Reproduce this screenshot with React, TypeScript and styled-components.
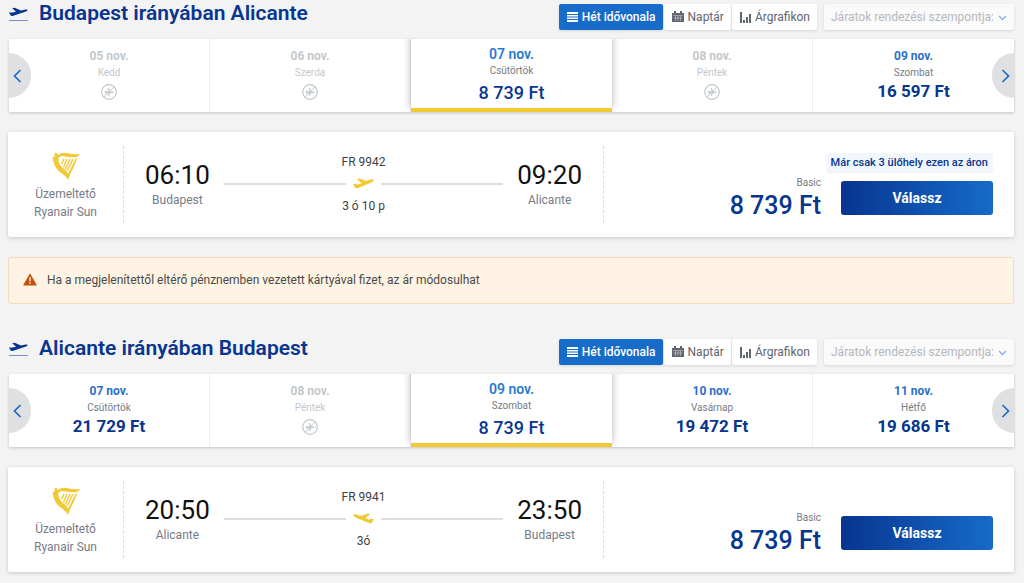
import React from 'react';
import styled, { createGlobalStyle, css } from 'styled-components';

const colors = {
  page: '#f3f3f3',
  navy: '#073590',
  blue: '#176bc9',
  yellow: '#f1c933',
  grey: '#767b85',
  pale: '#c3c8cd',
  ink: '#1d1d1d',
};

const GlobalStyle = createGlobalStyle`
  *, *::before, *::after { box-sizing: border-box; }
  body {
    margin: 0;
    background: ${colors.page};
    font-family: Roboto, "Liberation Sans", sans-serif;
    font-size: 12px;
    color: ${colors.ink};
  }
  button, select { font-family: inherit; margin: 0; }
  h2, p { margin: 0; }
  svg { display: block; flex: none; }
`;

const Page = styled.main`
  padding: 4px 10px 12px 8px;
`;

const Journey = styled.section`
  & + & { margin-top: 35px; }
`;

const Header = styled.header`
  display: flex;
  align-items: flex-start;
  justify-content: space-between;
  height: 35px;
`;

const Title = styled.h2`
  display: flex;
  align-items: center;
  gap: 11px;
  color: ${colors.navy};
  font-size: 21px;
  line-height: 18px;
  font-weight: 600;
`;

const Tools = styled.div`
  display: flex;
  gap: 7px;
`;

const Tabs = styled.div`
  display: flex;
  gap: 1px;
`;

const Tab = styled.button<{ $active?: boolean }>`
  display: flex;
  align-items: center;
  gap: 4px;
  height: 26px;
  padding: 0 7px 0 8px;
  border: 0;
  border-radius: 2px;
  background: ${p => (p.$active ? colors.blue : '#fff')};
  color: ${p => (p.$active ? '#fff' : '#60656f')};
  font-size: 12px;
  font-weight: ${p => (p.$active ? 500 : 400)};
  white-space: nowrap;
  box-shadow: 0 1px 3px rgba(0, 0, 0, 0.12);
`;

const SortBox = styled.label`
  position: relative;
  display: block;
  width: 190px;
  height: 26px;
  color: #7db3e8;

  svg {
    position: absolute;
    right: 7px;
    top: 11px;
    pointer-events: none;
  }
`;

const SortSelect = styled.select`
  appearance: none;
  width: 100%;
  height: 26px;
  padding: 0 16px 0 7px;
  border: 0;
  border-radius: 2px;
  background: #fafafa;
  color: #b4b8bd;
  opacity: 1;
  font-size: 12px;
  font-weight: 400;
  box-shadow: 0 1px 3px rgba(0, 0, 0, 0.12);
`;

const Strip = styled.div`
  position: relative;
  margin-left: 1px;
  box-shadow: 0 1px 3px rgba(0, 0, 0, 0.2);
`;

const Days = styled.div`
  display: grid;
  grid-template-columns: repeat(5, 1fr);
  height: 73px;
  overflow: hidden;
  background: #fff;
`;

const DayCell = styled.button<{ $state: 'open' | 'none' | 'selected' }>`
  display: flex;
  flex-direction: column;
  align-items: center;
  padding: 9px 0 0;
  border: 0;
  border-right: 1px solid #f0f0f0;
  background: #fff;
  color: ${p => (p.$state === 'none' ? colors.pale : colors.grey)};

  &:last-child { border-right: 0; }

  ${p =>
    p.$state === 'selected' &&
    css`
      position: relative;
      padding-top: 7px;
      border-right: 0;
      border-bottom: 4px solid ${colors.yellow};
      box-shadow: 0 -4px 8px rgba(0, 0, 0, 0.3);
    `}
`;

const DayDate = styled.span<{ $state: 'open' | 'none' | 'selected' }>`
  font-size: ${p => (p.$state === 'selected' ? 14 : 12)}px;
  line-height: 16px;
  font-weight: ${p => (p.$state === 'selected' ? 600 : 700)};
  color: ${p => (p.$state === 'none' ? colors.pale : p.$state === 'selected' ? '#2a7ad3' : '#2c6fcb')};
`;

const DayName = styled.span`
  font-size: 10px;
  line-height: 18px;
`;

const DayPrice = styled.span<{ $selected?: boolean }>`
  margin-top: ${p => (p.$selected ? 4 : 0)}px;
  color: ${colors.navy};
  font-size: ${p => (p.$selected ? 18 : 17)}px;
  line-height: 18px;
  font-weight: ${p => (p.$selected ? 500 : 700)};
`;

const NoFlight = styled.span`
  margin-top: 2px;
`;

const Arrow = styled.button<{ $side: 'left' | 'right' }>`
  position: absolute;
  top: 14px;
  ${p => p.$side}: 0;
  display: flex;
  align-items: center;
  justify-content: ${p => (p.$side === 'left' ? 'flex-start' : 'flex-end')};
  width: 22px;
  height: 45px;
  padding: 0 4px;
  border: 0;
  border-radius: ${p => (p.$side === 'left' ? '0 23px 23px 0' : '23px 0 0 23px')};
  background: #dfe0e2;
  color: ${colors.blue};
`;

const Card = styled.article`
  display: flex;
  align-items: center;
  height: 105px;
  margin-top: 20px;
  padding: 0 21px 0 0;
  background: #fff;
  border-radius: 2px;
  box-shadow: 0 1px 4px rgba(0, 0, 0, 0.18);
`;

const Operator = styled.div`
  display: flex;
  flex-direction: column;
  align-items: center;
  width: 116px;
  height: 77px;
  padding-top: 6px;
  border-right: 1px dashed #dcdddf;
  color: ${colors.grey};
  font-size: 12px;
  line-height: 18px;
  text-align: center;

  p { margin-top: 5px; }
`;

const Route = styled.div`
  display: flex;
  align-items: center;
  flex: 0 1 480px;
  height: 77px;
  padding: 0 21px;
  border-right: 1px dashed #dcdddf;
`;

const Stop = styled.div`
  text-align: center;
`;

const Time = styled.div`
  font-size: 26px;
  line-height: 28px;
  color: #111;
`;

const City = styled.div`
  margin-top: 2px;
  font-size: 12px;
  line-height: 18px;
  color: ${colors.grey};
`;

const Path = styled.div`
  flex: 1;
  margin: 0 14px;
  padding-bottom: 2px;
  color: #3c3f45;
  font-size: 12px;
  line-height: 16px;
  text-align: center;
`;

const PathLine = styled.div`
  display: flex;
  align-items: center;
  gap: 7px;
  height: 12px;
  margin: 8px 0;

  &::before, &::after {
    content: "";
    flex: 1;
    height: 2px;
    background: #dddee0;
  }
`;

const Fare = styled.div`
  margin-left: auto;
  padding-top: 28px;
  text-align: right;
`;

const FareName = styled.div`
  font-size: 10px;
  line-height: 14px;
  color: ${colors.grey};
`;

const FarePrice = styled.div`
  font-size: 25px;
  line-height: 32px;
  font-weight: 500;
  color: ${colors.navy};
`;

const Action = styled.div`
  display: flex;
  flex-direction: column;
  align-items: flex-end;
  align-self: flex-start;
  width: 172px;
  padding-top: 21px;
`;

const SeatNote = styled.div<{ $empty?: boolean }>`
  height: 20px;
  margin-bottom: 8px;
  padding: 0 5px;
  border-radius: 3px;
  background: ${p => (p.$empty ? 'transparent' : '#f1f7fc')};
  color: ${colors.navy};
  font-size: 11px;
  line-height: 20px;
  font-weight: 500;
  white-space: nowrap;
`;

const SelectButton = styled.button`
  width: 152px;
  height: 34px;
  border: 0;
  border-radius: 3px;
  background: linear-gradient(90deg, ${colors.navy}, ${colors.blue});
  color: #fff;
  font-size: 14px;
  font-weight: 700;
`;

const Alert = styled.div`
  display: flex;
  align-items: center;
  gap: 10px;
  height: 47px;
  margin-top: 20px;
  padding: 0 14px 2px;
  border: 1px solid #f3dcc0;
  border-radius: 3px;
  background: #fff4e3;
  color: #4a4a4a;
  font-size: 12px;
`;

const TakeoffIcon = () => (
  <svg width="20" height="16" viewBox="0 0 20 16" aria-hidden="true">
    <path d="M1 7 3 7.800 8 6.700 4.200 3.300 6.600 2.800 13 5.600 17.500 4.500Q19.500 4.200 19.700 5.100 19.800 6 18 6.600L4.500 10.900Q3.200 11.200 2.300 10.100Z" fill={colors.navy} />
    <path d="M1 15.500h19" stroke="#6f93cc" strokeWidth="1" />
  </svg>
);

const PlaneIcon = ({ inbound }: { inbound?: boolean }) => (
  <svg width="21" height="11" viewBox="0 0 21 11" aria-hidden="true">
    <path
      d="M.3 6.200 2.600 5.600 4.600 6.700 8.600 5 3.800 1.200 6.600.5 13.200 3 17.300 1.500Q20.300.7 20.700 2 20.900 3.400 18.500 4.400L5 9.900Q3 10.600 2 9.500Z"
      fill={colors.yellow}
      transform={inbound ? 'translate(21 0) scale(-1 1)' : undefined}
    />
  </svg>
);

const NoFlightIcon = () => (
  <svg width="16" height="16" viewBox="0 0 16 16" fill="none" stroke="#c3c8cd" aria-hidden="true">
    <circle cx="8" cy="8" r="7.300" strokeWidth="1.200" />
    <path d="M3 13 13 3" />
    <path d="M4 8.200h8.500M7 4.300 9 8.200 7.200 11.800M5 6.800v2.800" strokeWidth="1.400" />
  </svg>
);

const ListIcon = () => (
  <svg width="11" height="10" viewBox="0 0 11 10" fill="currentColor" aria-hidden="true">
    <path d="M0 0h11v2H0zM0 3h11v1.500H0zM0 5.500h11V7H0zM0 8h11v2H0z" />
  </svg>
);

const CalendarIcon = () => (
  <svg width="12" height="12" viewBox="0 0 12 12" aria-hidden="true">
    <path d="M0 2h12v9H0zM2 0h2v3H2zM8 0h2v3H8z" fill="#60656f" />
    <path d="M1 4.500h10M1.500 7h9M3.500 5v5M6 5v5M8.500 5v5" stroke="#c9cbce" strokeWidth=".6" />
  </svg>
);

const ChartIcon = () => (
  <svg width="11" height="11" viewBox="0 0 11 11" fill="currentColor" aria-hidden="true">
    <path d="M0 0h2v11H0zM3 8h2v3H3zM6 5h2v6H6zM9 2h2v9H9z" />
  </svg>
);

const Chevron = ({ dir }: { dir: 'left' | 'right' | 'down' }) => {
  const d = { left: 'M7.500 1 1.500 7l6 6', right: 'M1.500 1l6 6-6 6', down: 'M1 1l3.500 3.500L8 1' }[dir];
  const h = dir === 'down' ? 6 : 14;
  return (
    <svg width="9" height={h} viewBox={`0 0 9 ${h}`} fill="none" stroke="currentColor" strokeWidth={dir === 'down' ? 1.3 : 1.7} aria-hidden="true">
      <path d={d} />
    </svg>
  );
};

const HarpIcon = () => (
  <svg width="28" height="28" viewBox="0 0 28 28" aria-hidden="true">
    <path
      fill={colors.yellow}
      d="M.6 5.200 3 4 2.400 2Q2.800.6 4.200.7 5.700 1 5.600 3 9.500.4 14 .7 19 2.600 28 2.200 26.500 5 22.300 5.300 16 5.400 12 4.200 8.300 3.400 6.500 6 5.600 9.500 8.300 13.200 10.500 16 14 18.400 15.600 20 16 22 17.600 18.500 19.500 15L23.600 6.600 25.200 6.200 21.500 15.500Q17.800 22 16 28 14.500 24.500 10.500 21.700 4.500 18 2.500 13 1 9 .6 5.200Z"
    />
    <path d="M12 6.800 9.800 12M15 7 11.500 15.300M18 7 13.400 17.200M21 7 15.300 18.800" stroke={colors.yellow} strokeWidth="1.400" fill="none" />
  </svg>
);

const WarningIcon = () => (
  <svg width="14" height="13" viewBox="0 0 14 13" aria-hidden="true">
    <path d="M7 .3 14 12.500H0z" fill="#c2500c" />
    <path d="M7 4v4.500M7 9.600v1.500" stroke="#fff4e3" strokeWidth="1.300" />
  </svg>
);

type Day = { date: string; name: string; price?: string; selected?: boolean };
type Flight = {
  from: string; to: string; depart: string; arrive: string;
  code: string; duration: string; price: string; note?: string; inbound?: boolean;
};

const outDays: Day[] = [
  { date: '05 nov.', name: 'Kedd' },
  { date: '06 nov.', name: 'Szerda' },
  { date: '07 nov.', name: 'Csütörtök', price: '8 739 Ft', selected: true },
  { date: '08 nov.', name: 'Péntek' },
  { date: '09 nov.', name: 'Szombat', price: '16 597 Ft' },
];

const backDays: Day[] = [
  { date: '07 nov.', name: 'Csütörtök', price: '21 729 Ft' },
  { date: '08 nov.', name: 'Péntek' },
  { date: '09 nov.', name: 'Szombat', price: '8 739 Ft', selected: true },
  { date: '10 nov.', name: 'Vasárnap', price: '19 472 Ft' },
  { date: '11 nov.', name: 'Hétfő', price: '19 686 Ft' },
];

const DayOption = ({ day }: { day: Day }) => {
  const state = day.selected ? 'selected' : day.price ? 'open' : 'none';
  return (
    <DayCell type="button" $state={state} disabled={!day.price} aria-pressed={!!day.selected}>
      <DayDate $state={state}>{day.date}</DayDate>
      <DayName>{day.name}</DayName>
      {day.price ? <DayPrice $selected={day.selected}>{day.price}</DayPrice> : <NoFlight><NoFlightIcon /></NoFlight>}
    </DayCell>
  );
};

const JourneyPanel = ({ days, flight, children }: { days: Day[]; flight: Flight; children?: React.ReactNode }) => (
  <Journey>
    <Header>
      <Title><TakeoffIcon />{flight.from} irányában {flight.to}</Title>
      <Tools>
        <Tabs>
          <Tab type="button" $active><ListIcon />Hét idővonala</Tab>
          <Tab type="button"><CalendarIcon />Naptár</Tab>
          <Tab type="button"><ChartIcon />Árgrafikon</Tab>
        </Tabs>
        <SortBox>
          <SortSelect disabled aria-label="Járatok rendezési szempontja">
            <option>Járatok rendezési szempontja:</option>
          </SortSelect>
          <Chevron dir="down" />
        </SortBox>
      </Tools>
    </Header>
    <Strip>
      <Days>{days.map(d => <DayOption key={d.date} day={d} />)}</Days>
      <Arrow type="button" $side="left" aria-label="Előző"><Chevron dir="left" /></Arrow>
      <Arrow type="button" $side="right" aria-label="Következő"><Chevron dir="right" /></Arrow>
    </Strip>
    <Card>
      <Operator>
        <HarpIcon />
        <p>Üzemeltető<br />Ryanair Sun</p>
      </Operator>
      <Route>
        <Stop><Time>{flight.depart}</Time><City>{flight.from}</City></Stop>
        <Path>
          <div>{flight.code}</div>
          <PathLine><PlaneIcon inbound={flight.inbound} /></PathLine>
          <div>{flight.duration}</div>
        </Path>
        <Stop><Time>{flight.arrive}</Time><City>{flight.to}</City></Stop>
      </Route>
      <Fare>
        <FareName>Basic</FareName>
        <FarePrice>{flight.price}</FarePrice>
      </Fare>
      <Action>
        <SeatNote $empty={!flight.note}>{flight.note}</SeatNote>
        <SelectButton type="button">Válassz</SelectButton>
      </Action>
    </Card>
    {children}
  </Journey>
);

export default function App() {
  return (
    <>
      <GlobalStyle />
      <Page>
        <JourneyPanel
          days={outDays}
          flight={{ from: 'Budapest', to: 'Alicante', depart: '06:10', arrive: '09:20', code: 'FR 9942', duration: '3 ó 10 p', price: '8 739 Ft', note: 'Már csak 3 ülőhely ezen az áron' }}
        >
          <Alert role="status">
            <WarningIcon />
            Ha a megjelenítettől eltérő pénznemben vezetett kártyával fizet, az ár módosulhat
          </Alert>
        </JourneyPanel>
        <JourneyPanel
          days={backDays}
          flight={{ from: 'Alicante', to: 'Budapest', depart: '20:50', arrive: '23:50', code: 'FR 9941', duration: '3ó', price: '8 739 Ft', inbound: true }}
        />
      </Page>
    </>
  );
}
